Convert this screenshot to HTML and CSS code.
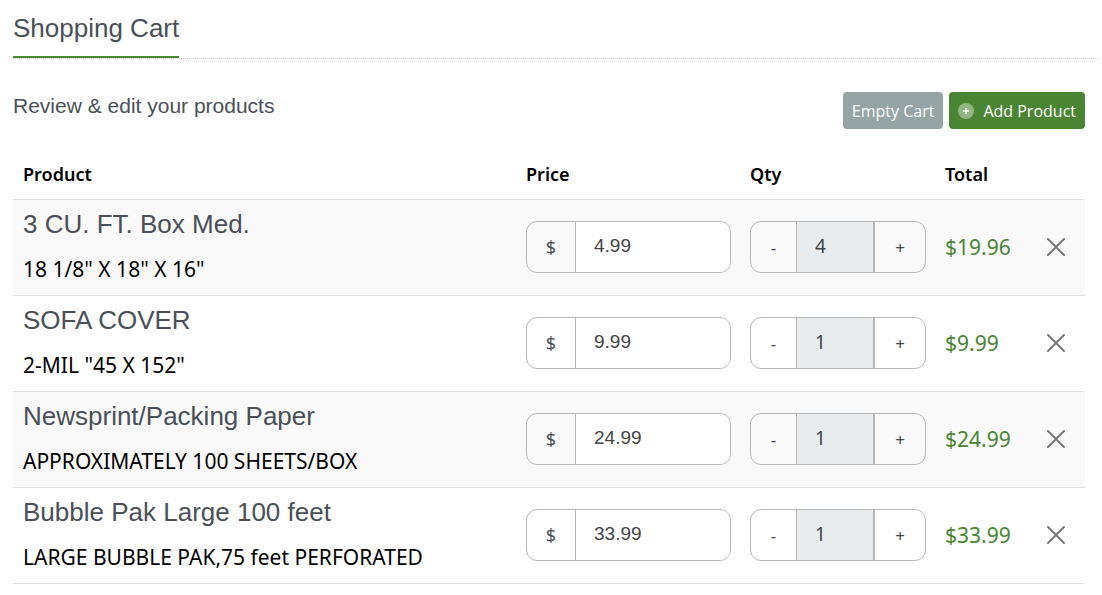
FILE: index.html
```html
<!DOCTYPE html>
<html lang="en">
<head>
<meta charset="utf-8">
<title>Shopping Cart</title>
<link rel="stylesheet" href="styles.css">
</head>
<body>
<main class="page">
  <header class="page-header">
    <h1 class="page-title">Shopping Cart</h1>
  </header>
  <section class="cart">
    <div class="toolbar">
      <h2 class="subtitle">Review &amp; edit your products</h2>
      <div class="actions">
        <button class="btn btn-grey" type="button">Empty Cart</button>
        <button class="btn btn-green" type="button">
          <svg class="plus-icon" viewBox="0 0 16 16" aria-hidden="true"><circle cx="8" cy="8" r="8" fill="#fff" fill-opacity=".4"/><path d="M8 5v6M5 8h6" stroke="#fff" stroke-width="1.4"/></svg>
          Add Product
        </button>
      </div>
    </div>
    <table class="products">
      <colgroup><col><col class="col-price"><col class="col-qty"><col class="col-total"><col class="col-remove"></colgroup>
      <thead>
        <tr><th scope="col">Product</th><th scope="col">Price</th><th scope="col">Qty</th><th scope="col">Total</th><td></td></tr>
      </thead>
      <tbody>
        <tr>
          <td><h3 class="name">3 CU. FT. Box Med.</h3><p class="description">18 1/8" X 18" X 16"</p></td>
          <td><div class="group"><span class="prefix">$</span><input class="field price" type="text" value="4.99" aria-label="Price"></div></td>
          <td><div class="group"><button class="step minus" type="button">-</button><input class="field qty" type="text" value="4" readonly aria-label="Quantity"><button class="step plus" type="button">+</button></div></td>
          <td class="total">$19.96</td>
          <td class="remove-cell"><button class="remove" type="button" aria-label="Remove"><svg viewBox="0 0 20 20"><path d="M2 2l16 16M18 2L2 18"/></svg></button></td>
        </tr>
        <tr>
          <td><h3 class="name">SOFA COVER</h3><p class="description">2-MIL "45 X 152"</p></td>
          <td><div class="group"><span class="prefix">$</span><input class="field price" type="text" value="9.99" aria-label="Price"></div></td>
          <td><div class="group"><button class="step minus" type="button">-</button><input class="field qty" type="text" value="1" readonly aria-label="Quantity"><button class="step plus" type="button">+</button></div></td>
          <td class="total">$9.99</td>
          <td class="remove-cell"><button class="remove" type="button" aria-label="Remove"><svg viewBox="0 0 20 20"><path d="M2 2l16 16M18 2L2 18"/></svg></button></td>
        </tr>
        <tr>
          <td><h3 class="name">Newsprint/Packing Paper</h3><p class="description">APPROXIMATELY 100 SHEETS/BOX</p></td>
          <td><div class="group"><span class="prefix">$</span><input class="field price" type="text" value="24.99" aria-label="Price"></div></td>
          <td><div class="group"><button class="step minus" type="button">-</button><input class="field qty" type="text" value="1" readonly aria-label="Quantity"><button class="step plus" type="button">+</button></div></td>
          <td class="total">$24.99</td>
          <td class="remove-cell"><button class="remove" type="button" aria-label="Remove"><svg viewBox="0 0 20 20"><path d="M2 2l16 16M18 2L2 18"/></svg></button></td>
        </tr>
        <tr>
          <td><h3 class="name">Bubble Pak Large 100 feet</h3><p class="description">LARGE BUBBLE PAK,75 feet PERFORATED</p></td>
          <td><div class="group"><span class="prefix">$</span><input class="field price" type="text" value="33.99" aria-label="Price"></div></td>
          <td><div class="group"><button class="step minus" type="button">-</button><input class="field qty" type="text" value="1" readonly aria-label="Quantity"><button class="step plus" type="button">+</button></div></td>
          <td class="total">$33.99</td>
          <td class="remove-cell"><button class="remove" type="button" aria-label="Remove"><svg viewBox="0 0 20 20"><path d="M2 2l16 16M18 2L2 18"/></svg></button></td>
        </tr>
      </tbody>
    </table>
  </section>
</main>
</body>
</html>
```

FILE: styles.css
```css
* { box-sizing: border-box; }
body { margin: 0; background: #fff; color: #000; font-family: "Noto Sans", "Open Sans", sans-serif; }
h1, h2, h3, p { margin: 0; font-weight: 400; }
.page { padding: 0 2px 0 13px; }
.page-header { display: flex; border-bottom: 1px dotted #d4d4d4; }
.page-title, .subtitle, .name { font-family: "Liberation Sans", Arial, sans-serif; color: #495057; }
.page-title { padding: 12px 0; border-bottom: 2px solid #4a8533; font-size: 26px; line-height: 32px; }
.cart { padding: 33px 15px 0 0; }
.toolbar { display: flex; justify-content: space-between; align-items: flex-start; }
.subtitle { font-size: 21px; line-height: 28px; }
.actions { display: flex; gap: 6px; }
.btn { display: flex; align-items: center; gap: 9px; height: 37px; padding: 0 9px; border: 0; border-radius: 4px; color: #fff; font: 16px "Open Sans", sans-serif; }
.btn-grey { background: #95a5a6; }
.btn-green { background: #4a8533; }
.plus-icon { width: 16px; height: 16px; }
.products { width: 100%; margin-top: 21px; border-collapse: collapse; table-layout: fixed; }
.col-price { width: 224px; }
.col-qty { width: 195px; }
.col-total { width: 102px; }
.col-remove { width: 48px; }
.products th { height: 49px; padding: 0 10px; text-align: left; font-size: 18px; font-weight: 600; }
.products tr { border-bottom: 1px solid #dee0e2; }
.products tbody tr:nth-child(odd) { background: #f9f9f9; }
.products tbody td { height: 96px; padding: 0 9px 0 10px; }
.name { font-size: 26px; line-height: 30px; }
.description { margin-top: 14px; font-size: 21px; line-height: 32px; }
.group { display: flex; height: 52px; border: 1px solid #b7b7b7; border-radius: 11px; overflow: hidden; }
.prefix { display: flex; align-items: center; justify-content: center; flex: 0 0 48px; font-size: 18px; color: #495057; }
.field { flex: 1; min-width: 0; border: 0; border-left: 1px solid #b7b7b7; padding: 0 18px 2px; color: #444; font: 19px "Liberation Sans", Arial, sans-serif; }
.price { background: #fff; }
.qty { background: #e9ecef; font-family: "Noto Sans", sans-serif; }
.step { border: 0; padding: 0; background: transparent; color: #444; font: 17px "Noto Sans", sans-serif; }
.minus { flex: 0 0 45px; }
.plus { flex: 0 0 52px; border-left: 2px solid #b7b7b7; }
.products .total { padding-right: 0; color: #4a8533; font-size: 21px; }
.products .remove-cell { padding: 0 0 0 9px; }
.remove { display: block; width: 20px; height: 20px; padding: 0; border: 0; background: transparent; }
.remove svg { display: block; width: 20px; height: 20px; fill: none; stroke: #777; stroke-width: 2; stroke-linecap: round; }
```
